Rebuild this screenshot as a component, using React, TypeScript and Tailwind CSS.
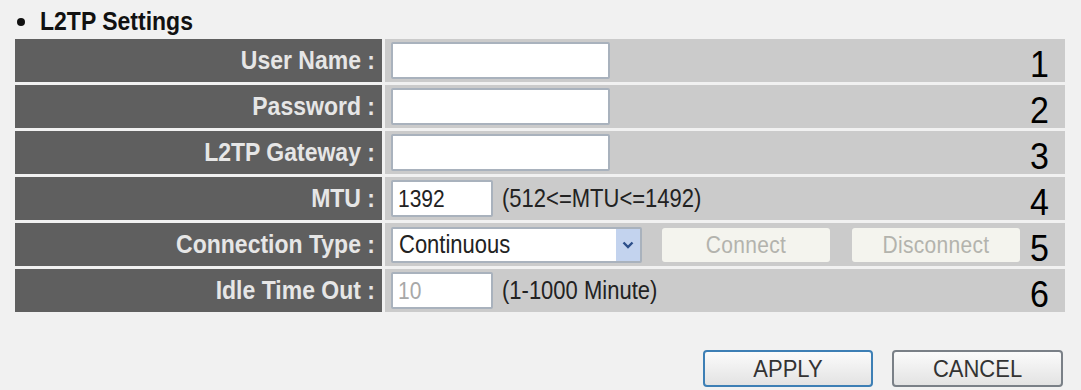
import React from "react";

const font = { fontFamily: '"Liberation Sans", Arial, sans-serif' };

function Row({ label, num, children }: { label: string; num: string; children?: React.ReactNode }) {
  return (
    <>
      <div className="flex h-[43px] items-center justify-end bg-[#5f5f5f] pr-[7px] text-[23px] font-bold text-[#e6e6e6]">
        <span className="inline-block scale-y-[1.12]">{label}</span>
      </div>
      <div className="flex h-[43px] items-center bg-[#cbcbcb] pl-[6px] pr-[16px]">
        <div className="flex items-center">{children}</div>
        <div className="ml-auto self-end pb-[1px] text-[34px] leading-none text-black">
          <span className="inline-block scale-y-[1.08]">{num}</span>
        </div>
      </div>
    </>
  );
}

function TextBox({ w, value, gray }: { w: string; value?: string; gray?: boolean }) {
  return (
    <div
      className={`flex h-[37px] items-center rounded-[2px] border-2 border-[#a9b2bd] bg-white pl-[5px] text-[21px] ${
        gray ? "text-[#a8a8a8]" : "text-[#222]"
      } ${w}`}
    >
      <span className="inline-block scale-y-[1.15]">{value}</span>
    </div>
  );
}

export default function App() {
  return (
    <div className="h-[390px] w-[1081px] overflow-hidden bg-[#f1f1f1]" style={font}>
      <div className="flex h-[39px] items-center pl-[17px] pt-[4px] text-[23px] font-bold text-[#111]">
        <span className="mr-[15px] inline-block h-[8px] w-[8px] rounded-full bg-[#111]" />
        <span className="inline-block scale-y-[1.12]">L2TP Settings</span>
      </div>
      <div className="ml-[15px] grid w-[1050px] grid-cols-[367px_680px] gap-[3px]">
        <Row label="User Name :" num="1">
          <TextBox w="w-[219px]" />
        </Row>
        <Row label="Password :" num="2">
          <TextBox w="w-[219px]" />
        </Row>
        <Row label="L2TP Gateway :" num="3">
          <TextBox w="w-[219px]" />
        </Row>
        <Row label="MTU :" num="4">
          <TextBox w="w-[102px]" value="1392" />
          <span className="ml-[9px] inline-block scale-y-[1.15] text-[22px] text-[#222]">(512&lt;=MTU&lt;=1492)</span>
        </Row>
        <Row label="Connection Type :" num="5">
          <div className="flex h-[36px] w-[251px] items-center rounded-[2px] border-2 border-[#a9b2bd] bg-white text-[22px] text-[#222]">
            <span className="inline-block scale-y-[1.15] pl-[6px]">Continuous</span>
            <div className="ml-auto flex h-full w-[24px] items-center justify-center bg-[#c3d3ee]">
              <svg width="12" height="8" viewBox="0 0 12 8">
                <path d="M1.5 1.5 L6 6 L10.5 1.5" fill="none" stroke="#2c4f8a" strokeWidth="2.4" />
              </svg>
            </div>
          </div>
          <div className="ml-[20px] flex h-[34px] w-[168px] items-center justify-center rounded-[3px] bg-[#f4f4ee] text-[21px] text-[#b3b3ad]">
            <span className="inline-block scale-y-[1.12] tracking-[0.3px]">Connect</span>
          </div>
          <div className="ml-[22px] flex h-[34px] w-[168px] items-center justify-center rounded-[3px] bg-[#f4f4ee] text-[21px] text-[#b3b3ad]">
            <span className="inline-block scale-y-[1.12] tracking-[0.3px]">Disconnect</span>
          </div>
        </Row>
        <Row label="Idle Time Out :" num="6">
          <TextBox w="w-[102px]" value="10" gray />
          <span className="ml-[9px] inline-block scale-y-[1.15] text-[22px] text-[#222]">(1-1000 Minute)</span>
        </Row>
      </div>
      <div className="mt-[38px] flex justify-end gap-[19px] pr-[18px]">
        <button className="flex h-[37px] w-[170px] items-center justify-center rounded-[4px] border-2 border-[#3d7fb5] bg-gradient-to-b from-[#fbfbfb] to-[#e3e3e3] text-[22px] text-[#333]">
          <span className="inline-block scale-y-[1.1]">APPLY</span>
        </button>
        <button className="flex h-[37px] w-[171px] items-center justify-center rounded-[4px] border-2 border-[#7a8087] bg-gradient-to-b from-[#fbfbfb] to-[#e3e3e3] text-[22px] text-[#333]">
          <span className="inline-block scale-y-[1.1]">CANCEL</span>
        </button>
      </div>
    </div>
  );
}
